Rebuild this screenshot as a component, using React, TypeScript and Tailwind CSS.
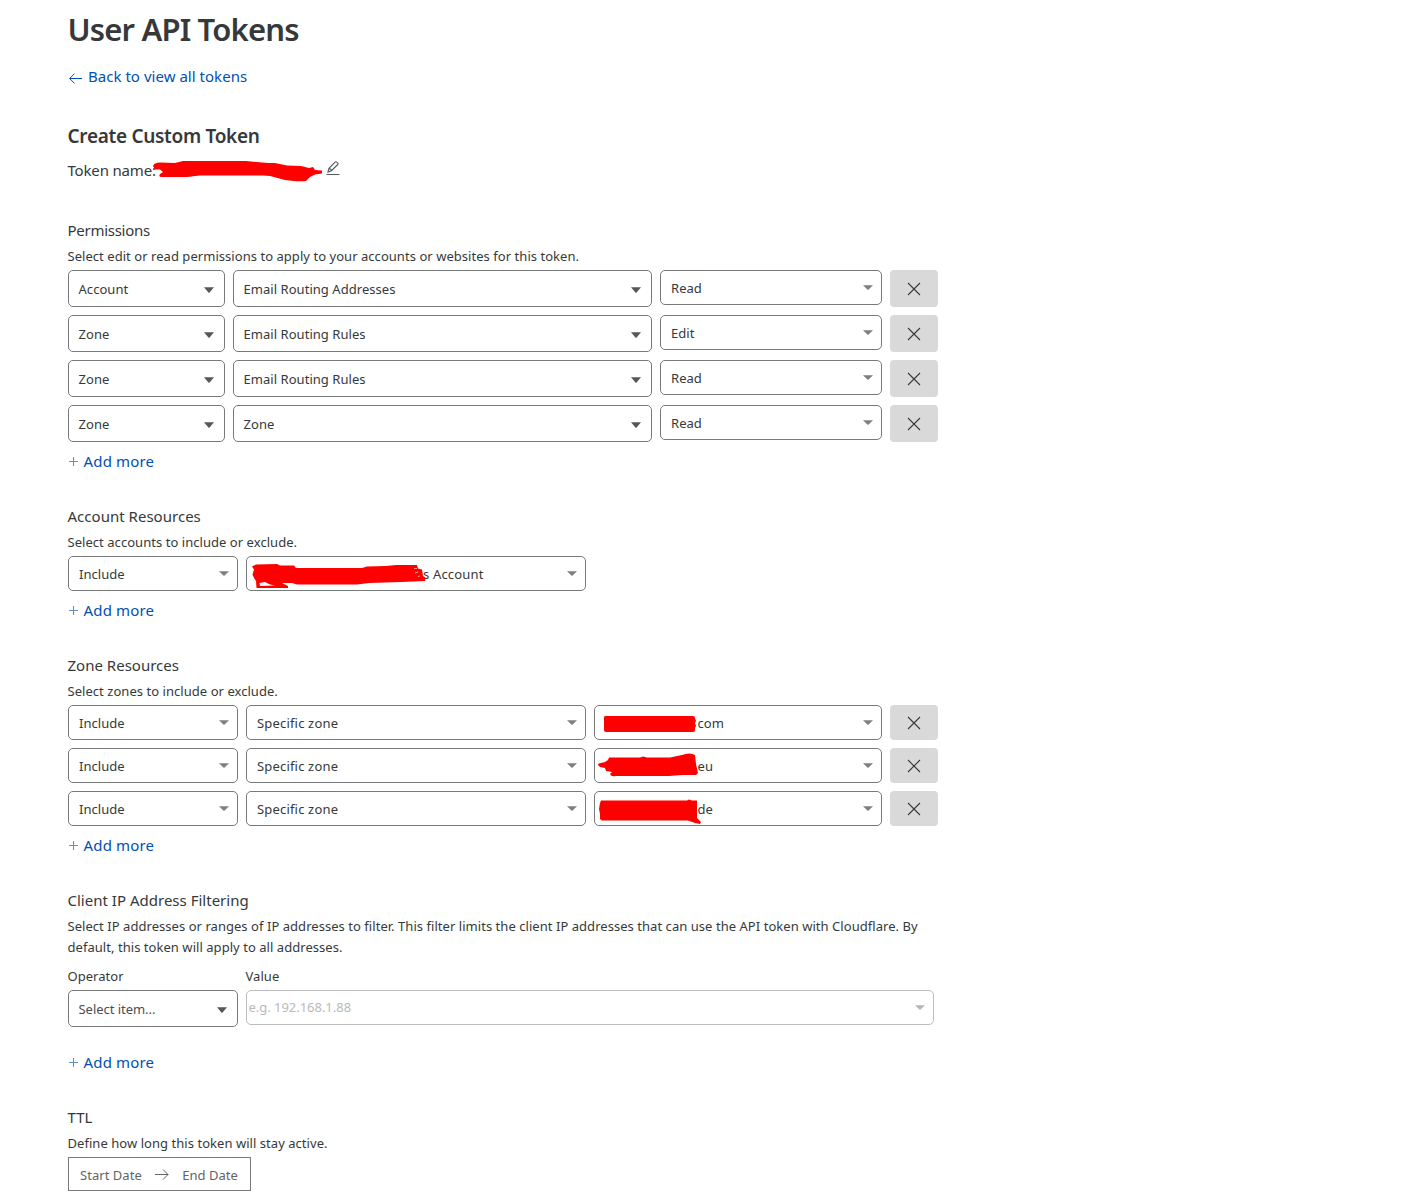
import type { ReactNode } from "react";

function Caret({ className = "mt-px h-[6px] text-[#555759]" }: { className?: string }) {
  return (
    <svg className={`w-[10px] shrink-0 ${className}`} viewBox="0 0 10 6" preserveAspectRatio="none" fill="currentColor">
      <path d="M0 0.3H10L5.6 5.4Q5 6 4.4 5.4Z" />
    </svg>
  );
}

function Native({ children, className = "" }: { children: ReactNode; className?: string }) {
  return (
    <div className={`flex h-[37px] items-center justify-between rounded-[5px] border border-[#77797b] pr-[10px] pl-[9.5px] pt-px ${className}`}>
      <span className="pt-[2px]">{children}</span>
      <Caret />
    </div>
  );
}

function Combo({ children, className = "" }: { children: ReactNode; className?: string }) {
  return (
    <div className={`relative flex h-[35px] items-center justify-between rounded-[5px] border border-[#77797b] pr-[8px] pl-[10px] ${className}`}>
      <span className="pt-[2px]">{children}</span>
      <Caret className="h-[5px] text-[#7d7f81]" />
    </div>
  );
}

function Remove({ className = "h-[35px]" }: { className?: string }) {
  return (
    <button className={`flex w-12 shrink-0 items-center justify-center rounded-[4px] bg-[#d9d9d9] ${className}`}>
      <svg className="h-[14px] w-[14px]" viewBox="0 0 14 14" fill="none" stroke="#36393a" strokeWidth="1.1">
        <path d="M1 1 13 13M13 1 1 13" />
      </svg>
    </button>
  );
}

function AddMore() {
  return (
    <a className="flex h-[38px] items-center text-[15px] text-[#0051b0]">
      <svg className="mr-[5.5px] ml-px h-[9px] w-[9px]" viewBox="0 0 9 9" fill="none" stroke="#5d92c9" strokeWidth="1">
        <path d="M0 4.5H9M4.5 0V9" />
      </svg>
      <span className="tracking-[0.16px]">Add more</span>
    </a>
  );
}

function Section({ title, description, tracking = "tracking-[0.01px]", children }: { title: string; description: string; tracking?: string; children: ReactNode }) {
  return (
    <section className="mt-6">
      <h3 className={`-ml-[0.5px] h-6 text-[15px] leading-6 ${tracking}`}>{title}</h3>
      <p className="mt-1 mb-[3px] -ml-[0.5px] leading-[21px]">{description}</p>
      {children}
    </section>
  );
}

const permissions = [
  ["Account", "Email Routing Addresses", "Read"],
  ["Zone", "Email Routing Rules", "Edit"],
  ["Zone", "Email Routing Rules", "Read"],
  ["Zone", "Zone", "Read"],
];

const zones = [
  { suffix: "com", d: "M10 12Q10 11 12 11H99Q101 11 101 13L102 16 101 18 102 21 101 23V25Q101 27 99 27H12Q10 27 10 25Z" },
  { suffix: "eu", d: "M4 17Q4 15 7 15L11 14 14 12 15 9.5H46L49 8.5 53 9.5H76L88 7Q96 4 101 7L102 16 104 25 102 27H88L75 28H22Q17 29 16 26L18 24 12 23 11 20 6 19Z" },
  { suffix: "de", d: "M6 12 7 9.5H93L95 8.5 98 9.5H103L103 27 107 31 106 33 101 32 94 29.5H8L6 28V23L5 18Z" },
];

export default function App() {
  return (
    <main className="h-[1195px] overflow-hidden bg-white pl-[68px] font-['Noto_Sans',sans-serif] text-[13px] tracking-[0.045px] text-[#36393a]">
      <div className="w-[870px]">
        <h1 className="-ml-[0.5px] h-[60px] text-[31px] leading-[59px] font-semibold tracking-[-0.83px]">User API Tokens</h1>
        <a className="flex h-[34px] items-center text-[15px] tracking-[0.03px] text-[#0051b0]">
          <svg className="mt-[2px] mr-[6px] ml-px h-[11px] w-[13px]" viewBox="0 0 13 11" fill="none" stroke="currentColor" strokeWidth="1">
            <path d="M13 5.5H0.7M5.5 0.6 0.7 5.5 5.5 10.4" />
          </svg>
          <span className="mb-[2px]">Back to view all tokens</span>
        </a>
        <h2 className="-ml-[0.5px] mt-[26px] h-8 text-[19px] leading-8 font-semibold tracking-[-0.3px]">Create Custom Token</h2>
        <div className="relative flex h-9 items-center text-[15px]">
          <span className="-ml-[0.5px] tracking-[-0.17px]">Token name:</span>
          <svg className="absolute top-0 left-[83px] h-9 w-[174px]" viewBox="0 0 174 36" fill="#f00">
            <path d="M2 14Q3 10.5 9 10.5L24 11 32 9H95L117 11 124 11 136 13.5 150 14 158 16 162 15 164 18 171 18.5V21.5L164 22.5 159 25 155 29Q148 30 134 28L119 24 112 23.5H49L36 25H11Q7 25 9 22L12 20 9 17.5H4Z" />
          </svg>
          <svg className="absolute top-[9px] left-[258px] h-[15px] w-[14px]" viewBox="0 0 14 15" fill="none" stroke="#55585a" strokeWidth="1.1">
            <path d="M0.5 13.5H13.5M2 11 3 7.3 9.1 1.1Q9.9.4 10.7 1.1L11.7 1.9Q12.4 2.7 11.7 3.5L5.5 9.7ZM3 7.3Q5.2 7.7 5.5 9.7" />
          </svg>
        </div>

        <div className="pt-[6px]">
          <Section
            title="Permissions"
            tracking="tracking-[-0.27px]"
            description="Select edit or read permissions to apply to your accounts or websites for this token."
          >
            <div className="flex flex-col gap-2">
              {permissions.map(([scope, group, level], i) => (
                <div key={i} className="flex items-start gap-2">
                  <Native className="w-[157px]">{scope}</Native>
                  <Native className="w-[419px]">{group}</Native>
                  <Combo className="w-[222px]">{level}</Combo>
                  <Remove className="h-[37px]" />
                </div>
              ))}
            </div>
            <AddMore />
          </Section>
        </div>

        <Section title="Account Resources" tracking="tracking-[0.02px]" description="Select accounts to include or exclude.">
          <div className="flex gap-2">
            <Combo className="w-[170px]">Include</Combo>
            <Combo className="w-[340px]">
              <span className="pl-[166px] tracking-[0.18px]">s Account</span>
              <svg className="absolute -top-px -left-px h-[35px] w-[190px]" viewBox="0 0 190 35" fill="#f00">
                <path d="M6 10.5 10 8.5 31 8 34 9.5H48L50 12H116L121 10.5 140 10 150 9H171L172 12.5 176 13.5 177 20 179.5 21.5 179 25 155 26 123 27 111 28.5H51L46 27H36L42 30V32H10.5L10 25 8 22 6.5 18.5 8 13.5Z" />
                <path d="M13.5 27 19 26 24 28.5 29 29.5 14 30Z" fill="#fff" />
                <path d="M168 12.5H171M169 17 172 16M172 20.5 174 20" stroke="#fff" strokeWidth="0.6" />
              </svg>
            </Combo>
          </div>
          <AddMore />
        </Section>

        <Section title="Zone Resources" description="Select zones to include or exclude.">
          <div className="flex flex-col gap-2">
            {zones.map((zone) => (
              <div key={zone.suffix} className="flex gap-2">
                <Combo className="w-[170px]">Include</Combo>
                <Combo className="w-[340px]">
                  <span className="tracking-[0.18px]">Specific zone</span>
                </Combo>
                <Combo className="w-[288px]">
                  <span className="pl-[92.5px]">{zone.suffix}</span>
                  <svg className="absolute -top-px -left-px h-[35px] w-[110px]" viewBox="0 0 110 35" fill="#f00">
                    <path d={zone.d} />
                  </svg>
                </Combo>
                <Remove />
              </div>
            ))}
          </div>
          <AddMore />
        </Section>

        <Section
          title="Client IP Address Filtering"
          description="Select IP addresses or ranges of IP addresses to filter. This filter limits the client IP addresses that can use the API token with Cloudflare. By default, this token will apply to all addresses."
        >
          <div className="flex gap-2 pt-[5px]">
            <div className="w-[170px]">
              <div className="-ml-[0.5px] h-6 leading-[21px]">Operator</div>
              <Native className="text-[#4b4e50]">
                <span className="tracking-[-0.04px]">Select item...</span>
              </Native>
            </div>
            <div className="w-[688px]">
              <div className="-ml-[0.5px] h-6 leading-[21px]">Value</div>
              <div className="flex h-[35px] items-center justify-between rounded-[5px] border border-[#bbbcbd] pr-[8px] pl-[1.5px] text-[#b9babb]">
                <span className="tracking-[-0.03px]">e.g. 192.168.1.88</span>
                <Caret className="h-[5px] text-[#b5b6b7]" />
              </div>
            </div>
          </div>
          <div className="pt-4">
            <AddMore />
          </div>
        </Section>

        <Section title="TTL" description="Define how long this token will stay active.">
          <div className="flex h-[34px] w-[183px] items-center justify-between border border-[#77797b] pt-px pr-[12px] pl-[11px] text-[#626466]">
            <span className="pt-[2px]">Start Date</span>
            <svg className="mb-px h-[11px] w-[14px]" viewBox="0 0 14 11" fill="none" stroke="currentColor" strokeWidth="1">
              <path d="M0 5.5H13M8 0.5 13 5.5 8 10.5" />
            </svg>
            <span className="pt-[2px]">End Date</span>
          </div>
        </Section>
      </div>
    </main>
  );
}
